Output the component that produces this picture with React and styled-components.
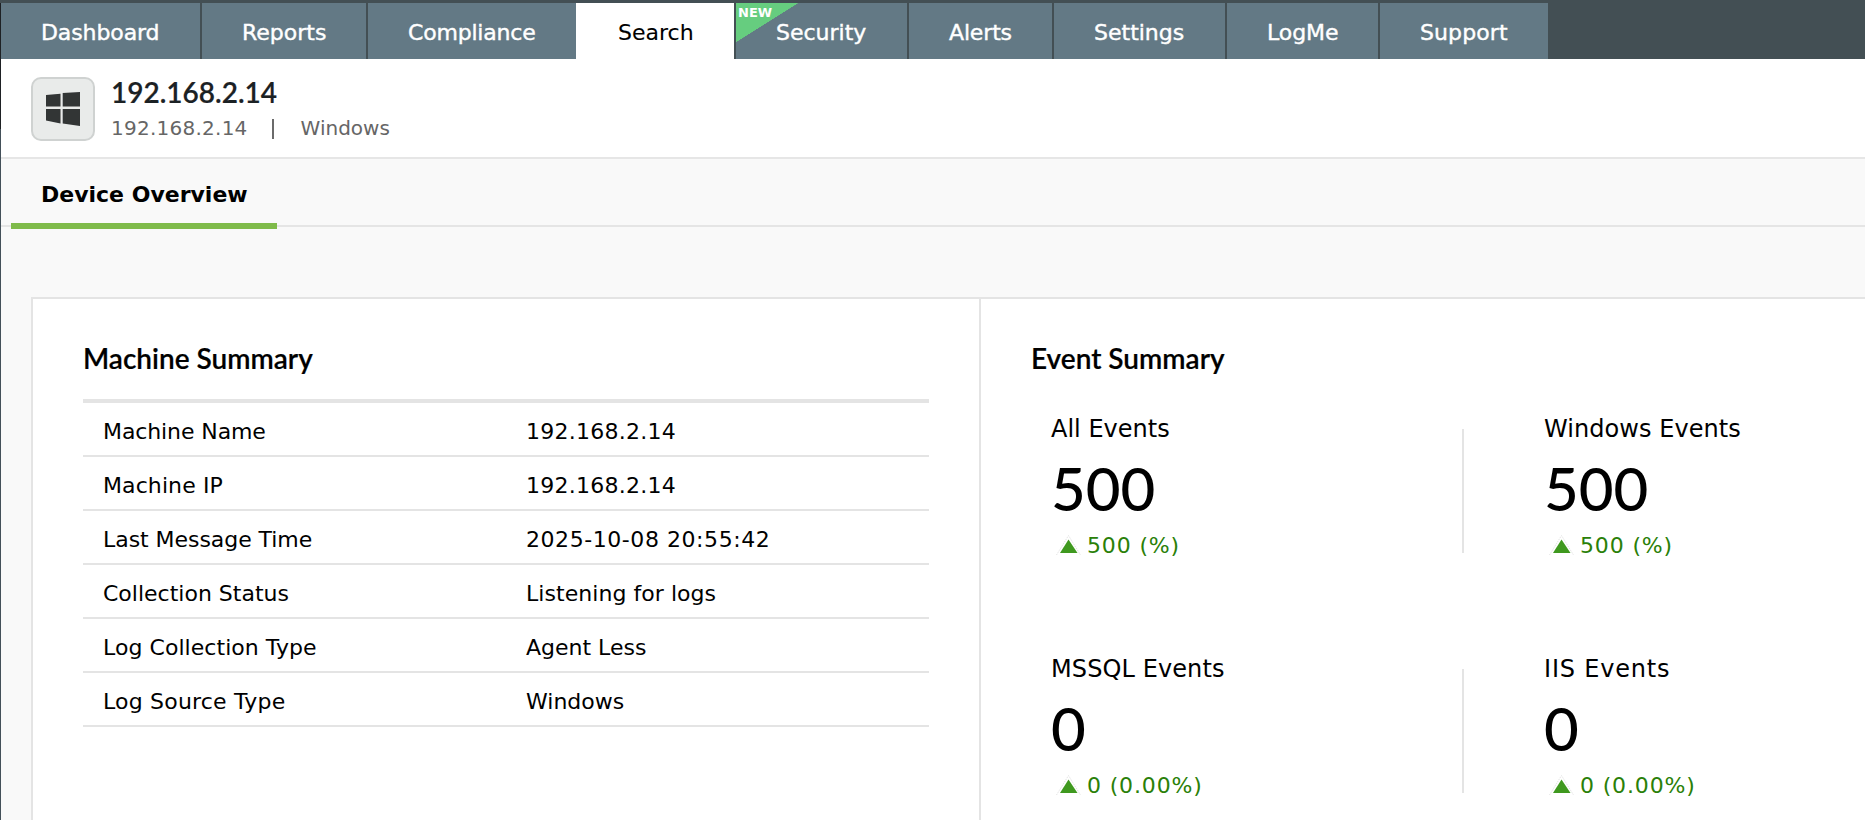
import React from 'react';
import styled, { createGlobalStyle, css } from 'styled-components';

const GlobalStyle = createGlobalStyle`
  * { box-sizing: border-box; }
  html, body { margin: 0; padding: 0; }
  body { overflow: hidden; background: #f9f9f9; }
`;

const sans = css`font-family: Verdana, 'DejaVu Sans', sans-serif;`;
const lato = css`font-family: Lato, sans-serif;`;

const Page = styled.div`
  ${sans}
  display: flex;
  width: 1865px;
  height: 820px;
  overflow: hidden;
  color: #000;
  font-size: 22px;
`;

const Edge = styled.div`
  flex: none;
  width: 1px;
  background: linear-gradient(#434f54 3px, #1e2124 3px 129px, #435059 129px);
`;

const Main = styled.div`
  flex: 1;
  min-width: 0;
  display: flex;
  flex-direction: column;
`;

const Text = styled.span`
  white-space: pre;
  letter-spacing: ${(p) => p.$ls || 0}px;
`;

const NavBar = styled.nav`
  flex: none;
  display: flex;
  gap: 2px;
  height: 59px;
  padding-top: 3px;
  background: #434f54;
`;

const Tab = styled.a`
  position: relative;
  width: ${(p) => p.$w}px;
  height: 56px;
  margin-left: ${(p) => (p.$active ? -2 : 0)}px;
  padding-left: ${(p) => (p.$active ? 42 : 40)}px;
  line-height: 60px;
  color: ${(p) => (p.$active ? '#000' : '#fff')};
  background: ${(p) => (p.$active ? '#fff' : '#637985')};
  -webkit-text-stroke: ${(p) => (p.$active ? 0.1 : 0.4)}px;
`;

const NewBadge = styled.span`
  position: absolute;
  top: 0;
  left: 0;
  width: 62px;
  height: 39px;
  padding: 0 0 0 2px;
  font-size: 13px;
  font-weight: 700;
  line-height: 19px;
  color: #fff;
  -webkit-text-stroke: 0;
  background: linear-gradient(to bottom right, #66cd7f 50%, transparent 50.5%);
`;

const Header = styled.header`
  flex: none;
  display: flex;
  gap: 16px;
  height: 100px;
  padding: 18px 0 0 30px;
  background: #fff;
  border-bottom: 2px solid #e6e6e6;
`;

const DeviceIcon = styled.div`
  display: flex;
  align-items: center;
  justify-content: center;
  width: 64px;
  height: 64px;
  border: 2px solid #cfd2d1;
  border-radius: 10px;
  background: #e9ebea;
`;

const DeviceName = styled.h1`
  ${lato}
  margin: 0;
  font-size: 28px;
  font-weight: 600;
  line-height: 30px;
  color: #1b2124;
  -webkit-text-stroke: 0.2px;
`;

const DeviceMeta = styled.div`
  display: flex;
  margin-top: 4px;
  font-size: 20px;
  line-height: 34px;
  color: #666;
`;

const MetaBar = styled.i`
  width: 2px;
  height: 20px;
  margin: 8px 27px 0 24px;
  background: #6b6b6b;
`;

const SubTabs = styled.div`
  flex: none;
  display: flex;
  height: 68px;
  padding-left: 10px;
  border-bottom: 2px solid #e5e5e5;
`;

const SubTab = styled.div`
  width: 266px;
  height: 70px;
  padding-left: 30px;
  border-bottom: 6px solid #7fbb4a;
  font-weight: 700;
  line-height: 72px;
`;

const Card = styled.section`
  flex: none;
  display: flex;
  width: 2020px;
  height: 600px;
  margin: 70px 0 0 30px;
  background: #fff;
  border: 2px solid #e4e4e4;
`;

const Machine = styled.div`
  flex: none;
  width: 948px;
  padding: 43px 50px 0;
  border-right: 2px solid #e4e4e4;
`;

const Events = styled.div`
  flex: 1;
  padding: 43px 0 0 50px;
`;

const PanelTitle = styled.h2`
  ${lato}
  height: 32px;
  margin: 0;
  font-size: 28px;
  font-weight: 600;
  line-height: 32px;
  -webkit-text-stroke: 0.2px;
`;

const Table = styled.div`
  margin-top: 25px;
  border-top: 4px solid #e4e4e4;
`;

const Row = styled.div`
  display: grid;
  grid-template-columns: 423px 1fr;
  height: 54px;
  padding-left: 20px;
  border-bottom: 2px solid #e4e4e4;
  line-height: 57px;
`;

const Grid = styled.div`
  display: grid;
  grid-template-columns: 433px 500px;
  grid-auto-rows: 240px;
  column-gap: 60px;
  padding: 0 0 0 20px;
  margin-top: 34px;
`;

const Metric = styled.div`
  display: flex;
  justify-content: space-between;
`;

const MetricLabel = styled.div`
  height: 40px;
  font-size: 24px;
  line-height: 42px;
`;

const MetricValue = styled.div`
  ${lato}
  height: 72px;
  margin-top: 4px;
  font-size: 60px;
  font-weight: 500;
  line-height: 72px;
`;

const Trend = styled.div`
  display: flex;
  align-items: center;
  gap: 6px;
  height: 40px;
  margin-top: 1px;
  padding-left: 5px;
  color: #2a8008;
`;

const Divider = styled.div`
  width: 2px;
  height: 124px;
  margin: 21px 20px 0 0;
  background: #e4e4e4;
`;

const TABS = [
  { label: 'Dashboard', w: 199, ls: -0.1 },
  { label: 'Reports', w: 164 },
  { label: 'Compliance', w: 208, ls: -0.2 },
  { label: 'Search', w: 158, active: true },
  { label: 'Security', w: 171, isNew: true },
  { label: 'Alerts', w: 143, ls: -0.15 },
  { label: 'Settings', w: 171 },
  { label: 'LogMe', w: 151, ls: -0.1 },
  { label: 'Support', w: 168, ls: 0.1 },
];

const ROWS = [
  ['Machine Name', '192.168.2.14', -0.1, 0.25],
  ['Machine IP', '192.168.2.14', 0.1, 0.25],
  ['Last Message Time', '2025-10-08 20:55:42', -0.05, 0.56],
  ['Collection Status', 'Listening for logs', 0, 0.05],
  ['Log Collection Type', 'Agent Less', 0.05, 0],
  ['Log Source Type', 'Windows', 0.2, 0],
];

const METRICS = [
  { label: 'All Events', ls: 0, value: '500', trend: '500 (%)', divider: true },
  { label: 'Windows Events', ls: 0.05, value: '500', trend: '500 (%)' },
  { label: 'MSSQL Events', ls: 0.1, value: '0', trend: '0 (0.00%)', divider: true },
  { label: 'IIS Events', ls: 0.8, value: '0', trend: '0 (0.00%)' },
];

const WindowsLogo = () => (
  <svg width="36" height="36" viewBox="0 0 36 36">
    <defs>
      <filter id="soften">
        <feGaussianBlur stdDeviation="0.7" />
      </filter>
    </defs>
    <path
      d="M1 4 15.5 2.8V15.6H1zM17.7 2 35 1V15.6H17.7zM1 18H15.5V32.5L1 29.5zM17.7 18H35V35L17.7 32.5z"
      fill="#313435"
      filter="url(#soften)"
    />
  </svg>
);

const UpArrow = () => (
  <svg width="25" height="21" viewBox="0 0 25 21">
    <path d="M.5 20 12.5 .5 24.5 20" fill="none" stroke="#dcdcdc" strokeWidth=".8" strokeDasharray="1.5 1" />
    <path d="M12.5 4.5 21.5 18H4z" fill="#3f991f" />
  </svg>
);

export default function App() {
  return (
    <Page>
      <GlobalStyle />
      <Edge />
      <Main>
        <NavBar>
          {TABS.map((t) => (
            <Tab key={t.label} $w={t.w} $active={t.active}>
              {t.isNew && <NewBadge>NEW</NewBadge>}
              <Text $ls={t.ls}>{t.label}</Text>
            </Tab>
          ))}
        </NavBar>
        <Header>
          <DeviceIcon><WindowsLogo /></DeviceIcon>
          <div>
            <DeviceName>192.168.2.14</DeviceName>
            <DeviceMeta>
              <Text $ls={0.25}>192.168.2.14</Text>
              <MetaBar />
              <Text>Windows</Text>
            </DeviceMeta>
          </div>
        </Header>
        <SubTabs>
          <SubTab><Text>Device Overview</Text></SubTab>
        </SubTabs>
        <Card>
          <Machine>
            <PanelTitle>Machine Summary</PanelTitle>
            <Table>
              {ROWS.map(([name, value, nameLs, valueLs]) => (
                <Row key={name}>
                  <Text $ls={nameLs}>{name}</Text>
                  <Text $ls={valueLs}>{value}</Text>
                </Row>
              ))}
            </Table>
          </Machine>
          <Events>
            <PanelTitle>Event Summary</PanelTitle>
            <Grid>
              {METRICS.map((m) => (
                <Metric key={m.label}>
                  <div>
                    <MetricLabel><Text $ls={m.ls}>{m.label}</Text></MetricLabel>
                    <MetricValue>{m.value}</MetricValue>
                    <Trend><UpArrow /><Text $ls={0.85}>{m.trend}</Text></Trend>
                  </div>
                  {m.divider && <Divider />}
                </Metric>
              ))}
            </Grid>
          </Events>
        </Card>
      </Main>
    </Page>
  );
}
